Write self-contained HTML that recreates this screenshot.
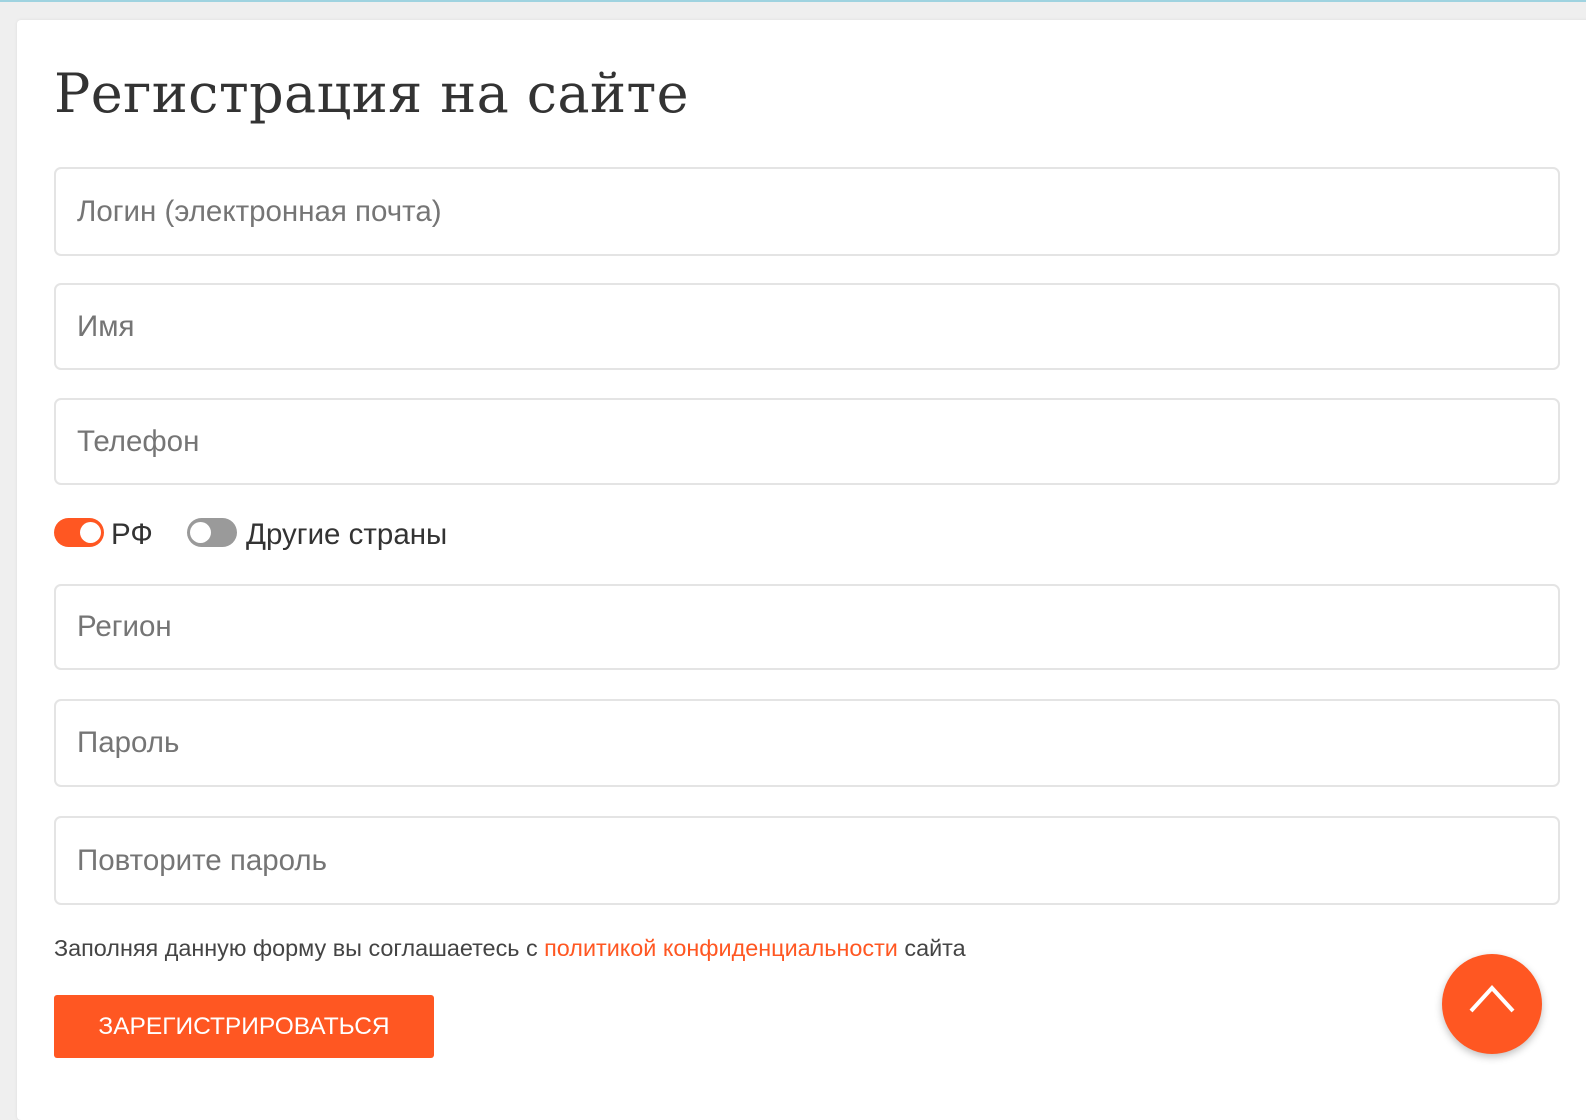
<!DOCTYPE html>
<html><head><meta charset="utf-8"><style>
*{box-sizing:border-box;margin:0;padding:0}
html,body{width:1586px;height:1080px;overflow:hidden;background:#efefef;font-family:"Liberation Sans",sans-serif}
.top{position:absolute;left:0;top:0;width:1586px;height:2px;background:#9fd3e0}
.card{position:absolute;left:17px;top:20px;width:1600px;height:1100px;background:#fff;border-radius:4px;box-shadow:0 0 3px rgba(0,0,0,.08)}
h1{position:absolute;left:54px;top:62px;font-family:"DejaVu Serif","Liberation Serif",serif;font-weight:normal;font-size:54px;color:#333;letter-spacing:0.4px;white-space:nowrap}
.in{position:absolute;left:54px;width:1506px;border:2px solid #e4e4e4;border-radius:7px;font-size:29.5px;color:#757575;padding-left:21px;display:flex;align-items:center}
.tg{position:absolute;top:518px;width:50px;height:29px;border-radius:15px}
.tg i{position:absolute;top:4px;width:21px;height:21px;border-radius:50%;background:#fff}
.lbl{position:absolute;top:518px;font-size:29.5px;color:#333}
.note{position:absolute;left:54px;top:935px;font-size:23.4px;color:#444}
.note span{color:#ff5722}
.btn{position:absolute;left:54px;top:995px;width:380px;height:63px;background:#ff5722;border-radius:3px;color:#fff;font-size:24.5px;display:flex;align-items:center;justify-content:center}
.up{position:absolute;left:1442px;top:954px;width:100px;height:100px;border-radius:50%;background:#ff5722;box-shadow:0 3px 8px rgba(0,0,0,.25)}
</style></head><body>
<div class="top"></div>
<div class="card"></div>
<h1>Регистрация на сайте</h1>
<div class="in" style="top:167px;height:89px">Логин (электронная почта)</div>
<div class="in" style="top:283px;height:87px">Имя</div>
<div class="in" style="top:398px;height:87px">Телефон</div>
<div class="tg" style="left:54px;background:#ff5722"><i style="left:26px"></i></div>
<div class="lbl" style="left:111px">РФ</div>
<div class="tg" style="left:187px;background:#9a9a9a"><i style="left:3px"></i></div>
<div class="lbl" style="left:246px">Другие страны</div>
<div class="in" style="top:584px;height:86px">Регион</div>
<div class="in" style="top:699px;height:88px">Пароль</div>
<div class="in" style="top:816px;height:89px">Повторите пароль</div>
<div class="note">Заполняя данную форму вы соглашаетесь с <span>политикой конфиденциальности</span> сайта</div>
<div class="btn">ЗАРЕГИСТРИРОВАТЬСЯ</div>
<div class="up"><svg width="100" height="100" viewBox="0 0 100 100"><path d="M29 57 L50 34 L71 57" fill="none" stroke="#fff" stroke-width="4"/></svg></div>
</body></html>
